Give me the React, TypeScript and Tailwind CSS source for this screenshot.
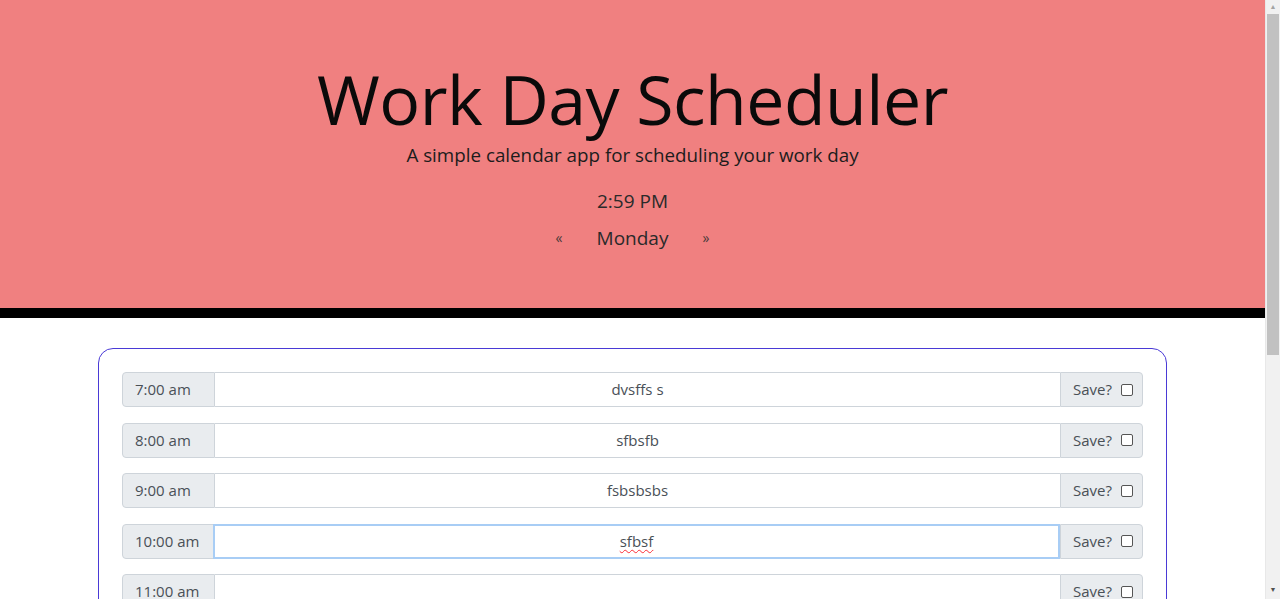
import React from "react";

const hours = [
  { time: "7:00 am", text: "dvsffs s" },
  { time: "8:00 am", text: "sfbsfb" },
  { time: "9:00 am", text: "fsbsbsbs" },
  { time: "10:00 am", text: "sfbsf", focused: true },
  { time: "11:00 am", text: "" },
  { time: "12:00 pm", text: "" },
];

function HourRow({ time, text, focused }: { time: string; text: string; focused?: boolean }) {
  return (
    <div className="flex h-[35px] shrink-0 text-[15px] text-[#495057]">
      <div className="w-[93px] shrink-0 flex items-center pl-3 bg-[#e9ecef] border border-[#ced4da] rounded-l-[4px]">
        {time}
      </div>
      <div
        className={
          focused
            ? "flex-1 flex items-center justify-center bg-white border-2 border-[#a8cdf5] -ml-[2px] relative z-10"
            : "flex-1 flex items-center justify-center bg-white border-y border-[#ced4da]"
        }
      >
        {focused ? (
          <span className="underline decoration-wavy decoration-red-500 decoration-1 underline-offset-2">{text}</span>
        ) : (
          text
        )}
      </div>
      <div className="w-[83px] shrink-0 flex items-center pl-3 gap-[9px] bg-[#e9ecef] border border-[#ced4da] rounded-r-[4px]">
        <span>Save?</span>
        <span className="w-[12px] h-[12px] border border-[#555] rounded-[2px] bg-white" />
      </div>
    </div>
  );
}

function Scrollbar() {
  return (
    <div className="w-[15px] shrink-0 bg-[#f1f1f1] flex flex-col items-center border-l border-[#e8e8e8]">
      <div className="h-[14px] flex items-center justify-center text-[#a3a3a3] text-[7px]">▲</div>
      <div className="w-[12px] h-[341px] bg-[#c1c1c1]" />
      <div className="flex-1" />
      <div className="h-[17px] flex items-center justify-center text-[#505050] text-[7px]">▼</div>
    </div>
  );
}

export default function App() {
  return (
    <div className="h-[599px] overflow-hidden flex bg-white font-['Open_Sans',sans-serif]">
      <div className="flex-1 min-w-0 flex flex-col">
        <header className="h-[318px] shrink-0 bg-[#f08080] border-b-[10px] border-black flex flex-col items-center text-center">
          <h1 className="mt-[59px] text-[68px] font-normal tracking-[-0.5px] leading-[80px] text-[#0a0a0a]">
            Work Day Scheduler
          </h1>
          <p className="mt-[1px] text-[18.8px] leading-[30px] text-[#1c1c1c]">
            A simple calendar app for scheduling your work day
          </p>
          <p className="mt-[16px] text-[19px] leading-[30px] text-[#2a2a2a]">2:59 PM</p>
          <div className="mt-[7px] flex items-center text-[#2a2a2a]">
            <span className="text-[14px] leading-[30px] text-[#4a3a3a]">«</span>
            <span className="mx-[34px] text-[19px] leading-[30px]">Monday</span>
            <span className="text-[14px] leading-[30px] text-[#4a3a3a]">»</span>
          </div>
        </header>
        <main className="flex-1 px-[98px] pt-[30px]">
          <div className="border border-[#4a3ad6] rounded-[15px] px-[23px] pt-[23px] pb-[23px] flex flex-col gap-[15.5px]">
            {hours.map((h) => (
              <HourRow key={h.time} time={h.time} text={h.text} focused={h.focused} />
            ))}
          </div>
        </main>
      </div>
      <Scrollbar />
    </div>
  );
}
